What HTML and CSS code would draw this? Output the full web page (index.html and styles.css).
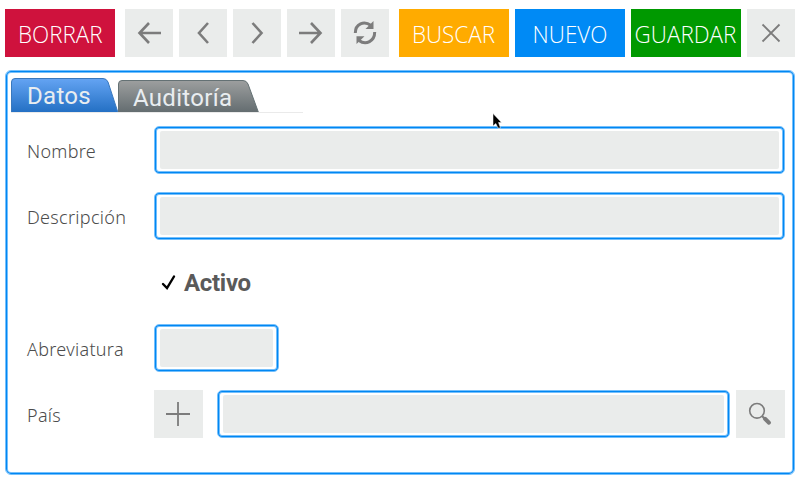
FILE: index.html
```
<!DOCTYPE html>
<html lang="es">
<head>
<meta charset="utf-8">
<title>Datos</title>
<link rel="stylesheet" href="styles.css">
</head>
<body>
<div class="toolbar">
  <button class="action delete"><span>BORRAR</span></button>
  <button class="square first"><svg viewBox="0 0 48 48"><path class="thick" d="M24 14 14.5 24 24 34M14.5 24H36"/></svg></button>
  <button class="square"><svg viewBox="0 0 48 48"><path class="thick" d="M29 14 20 24 29 34"/></svg></button>
  <button class="square"><svg viewBox="0 0 48 48"><path class="thick" d="M19.5 14 28.5 24 19.5 34"/></svg></button>
  <button class="square"><svg viewBox="0 0 48 48"><path class="thick" d="M24 14 33.5 24 24 34M33.5 24H12"/></svg></button>
  <button class="square"><svg viewBox="0 0 48 48"><path class="arc" d="M14.3 24C14.3 15 23 11.2 30 16.5M33.7 23C33.7 32 25 36.8 18 31.5"/><path class="solid" d="M32.5 12V20H24.5ZM15.5 35V27.3H23.5Z"/></svg></button>
  <button class="action search"><span>BUSCAR</span></button>
  <button class="action new"><span>NUEVO</span></button>
  <button class="action save"><span>GUARDAR</span></button>
  <button class="square"><svg viewBox="0 0 48 48"><path class="cross" d="M15.5 15.5 32.5 32.5M32.5 15.5 15.5 32.5"/></svg></button>
</div>
<main class="panel outlined">
  <nav class="tabs">
    <a class="tab data">
      <svg viewBox="0 0 107 34"><defs><linearGradient id="blue" x2="0" y2="1"><stop stop-color="#64a4f3"/><stop offset="1" stop-color="#2470c4"/></linearGradient></defs><path fill="url(#blue)" stroke="#3978bd" d="M.5 34V4Q.5.5 4 .5H92Q95.5.5 97 4L106.8 34"/></svg>
      <span>Datos</span>
    </a>
    <a class="tab audit">
      <svg viewBox="0 0 141 32"><defs><linearGradient id="gray" x2="0" y2="1"><stop stop-color="#9d9f9f"/><stop offset="1" stop-color="#646d70"/></linearGradient></defs><path fill="url(#gray)" stroke="#647174" d="M.5 32V4Q.5.5 4 .5H125Q128.5.5 130 4L140.3 32"/></svg>
      <span>Auditoría</span>
    </a>
  </nav>
  <form class="form">
    <div class="row"><label class="name">Nombre</label><div class="field outlined"></div></div>
    <div class="row"><label class="description">Descripción</label><div class="field outlined"></div></div>
    <div class="row"><div class="check"><svg viewBox="0 0 16 18"><path d="M2 10 6 14 13 2.5"/></svg><span>Activo</span></div></div>
    <div class="row"><label class="abbreviation">Abreviatura</label><div class="field outlined short"></div></div>
    <div class="row"><label class="country">País</label><button type="button" class="square add"><svg viewBox="0 0 49 48"><path class="plus" d="M12 24H36M24 12V36"/></svg></button><div class="field outlined lookup"></div><button type="button" class="square find"><svg viewBox="0 0 49 48"><circle cx="21" cy="20.8" r="7.3"/><path class="join" d="M26 26 29 29"/><path class="handle" d="M29 28.8 33 32.7"/></svg></button></div>
  </form>
</main>
<svg class="cursor" viewBox="0 0 10 16"><path d="M1 .5V13L3.8 10.5 6 15H8.5L6.5 9.5H9.5Z"/></svg>
</body>
</html>
```
FILE: styles.css
```
* { box-sizing: border-box; }
body {
  margin: 0;
  width: 800px;
  height: 480px;
  overflow: hidden;
  background: #fff;
  font-family: "Noto Sans", sans-serif;
}
svg { display: block; }
button { border: 0; padding: 0; font: inherit; }
.toolbar { display: flex; gap: 6px; padding: 9px 5px 0; height: 70px; }
.action {
  width: 110px;
  height: 48px;
  color: #fff;
  font: 300 24px/50px "Open Sans", sans-serif;
  text-align: center;
  white-space: nowrap;
}
.action span { display: inline-block; transform: scaleX(.935); }
.search span, .save span { margin-left: -2px; }
.delete { background: #cf123d; }
.search { background: #ffab00; margin-left: 4px; }
.new { background: #008af5; }
.save { background: #009900; }
.square { width: 48px; height: 48px; background: #eaeceb; }
.square.first { margin-left: 4px; }
.square svg { width: 100%; height: 100%; fill: none; stroke: #7c7c7c; }
.thick { stroke-width: 2.6; }
.cross, .plus { stroke-width: 1.8; }
.arc { stroke-width: 3; }
.square .solid { fill: #7c7c7c; stroke: none; }
.square circle { stroke-width: 1.6; }
.join { stroke-width: 2; }
.handle { stroke-width: 4; stroke-linecap: round; }
.outlined {
  border: 1px solid #74bffb;
  box-shadow: inset 0 0 0 1px #0087f3, inset 0 0 0 2px #74bffb;
}
.panel {
  width: 790px;
  height: 405px;
  margin-left: 5px;
  padding: 7px 0 0 5px;
  border-radius: 6px;
}
.tabs {
  display: flex;
  align-items: flex-end;
  width: 292px;
  height: 35px;
  border-bottom: 1px solid #eaeaea;
}
.tab { display: grid; color: #e9edf0; font: 400 24px/34px Roboto, sans-serif; }
.tab > * { grid-area: 1 / 1; }
.data { width: 107px; height: 34px; }
.data svg { width: 107px; height: 34px; }
.data span { padding: 1px 0 0 16px; letter-spacing: .3px; height: 34px; }
.audit { width: 141px; height: 32px; }
.audit svg { width: 141px; height: 32px; }
.audit span { padding: 1px 0 0 15px; letter-spacing: .3px; height: 32px; }
.form { padding: 13px 9px 0 15px; }
.row { display: flex; align-items: center; height: 48px; margin-bottom: 18px; }
label {
  width: 128px;
  padding: 1px 0 0 1px;
  color: #4c4c4c;
  font-size: 18px;
  font-weight: 350;
  line-height: 24px;
  letter-spacing: .3px;
  flex: none;
}
.field {
  flex: 1;
  height: 48px;
  padding: 4px 5px;
  border-radius: 5px;
}
.field::before { content: ""; display: block; height: 38px; background: #eaeceb; border-radius: 2px; }
.field.short { flex: none; width: 125px; }
.square.add, .square.find { width: 49px; flex: none; }
.add { margin: 0 14px 0 0; }
.find { margin-left: 6px; }
.check { display: flex; align-items: center; margin-left: 135px; padding-top: 1px; }
.check svg { width: 16px; height: 18px; fill: none; stroke: #000; stroke-width: 2.4; stroke-linecap: round; }
.check span { margin-left: 7px; color: #5a5a5a; font: 700 24px/28px Roboto, sans-serif; letter-spacing: -.3px; }
.cursor { position: absolute; left: 492px; top: 113px; width: 10px; height: 16px; fill: #000; stroke: #fff; stroke-width: .5; overflow: visible; }
```
